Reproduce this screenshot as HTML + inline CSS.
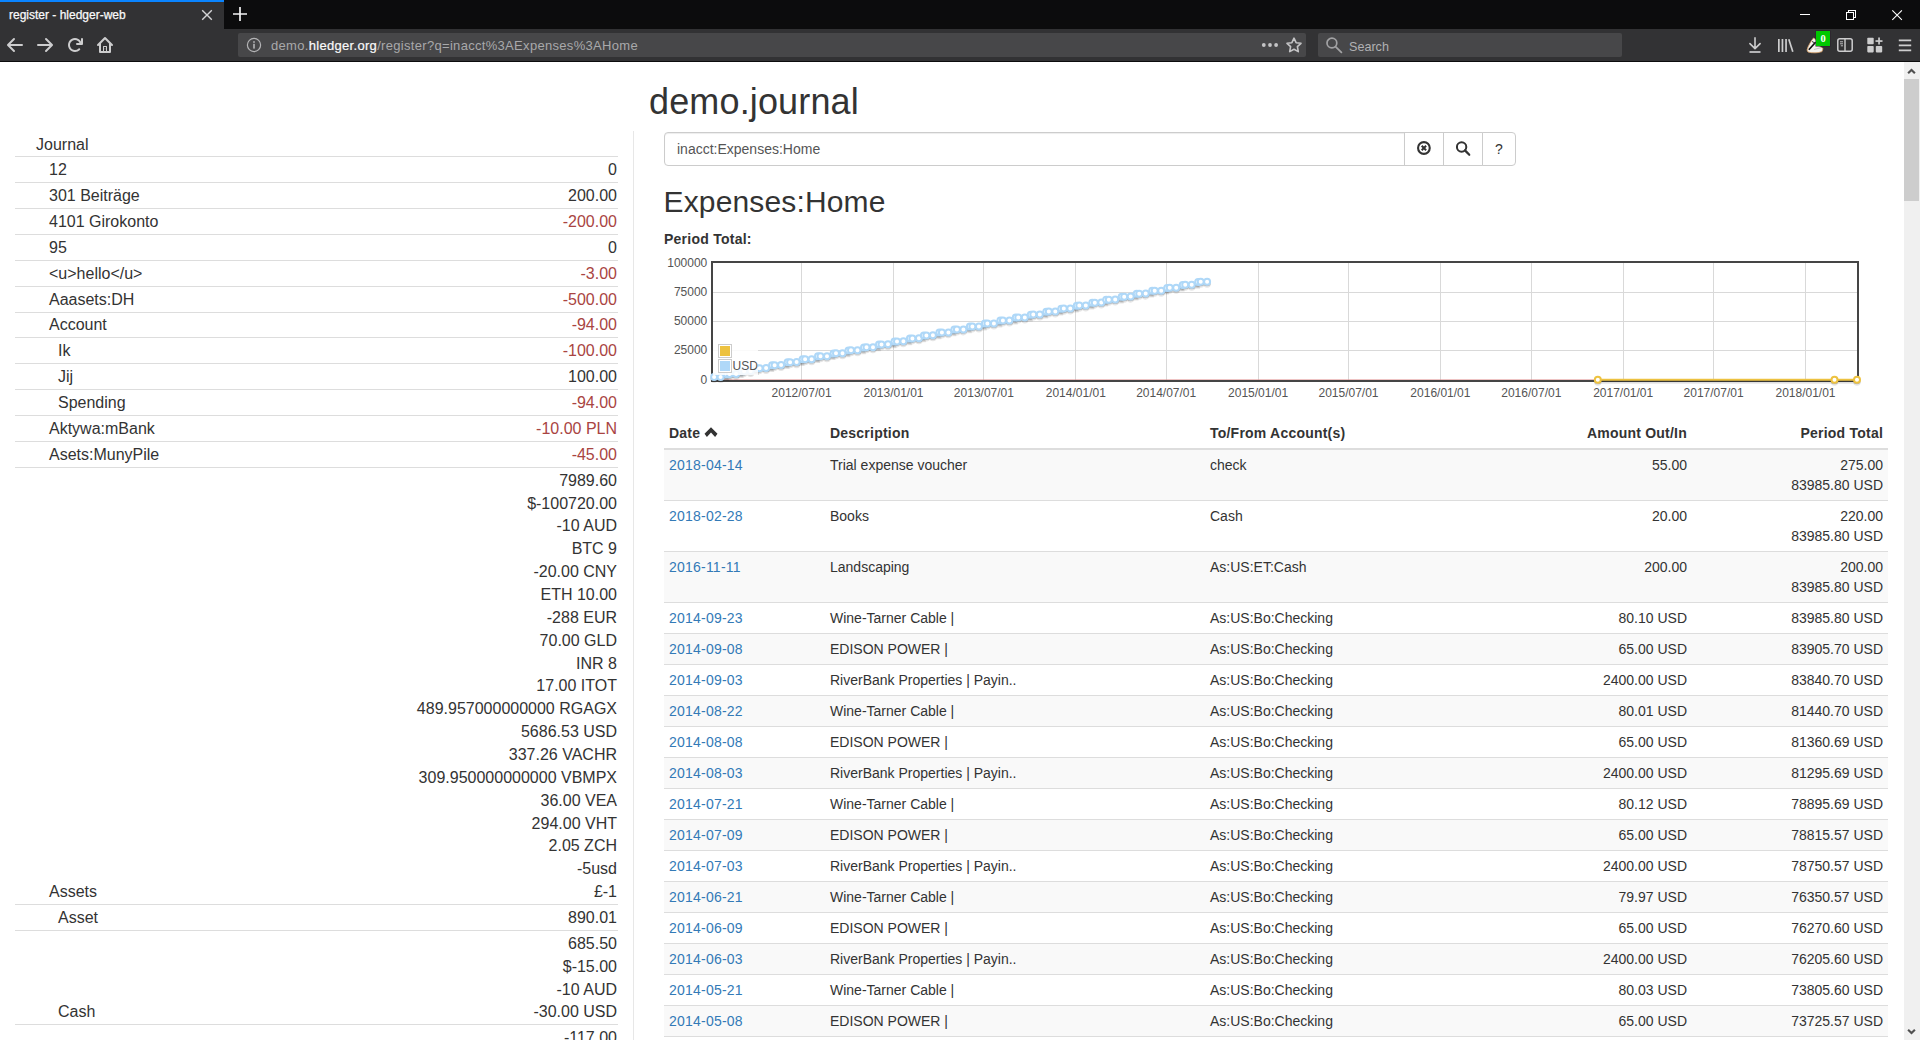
<!DOCTYPE html>
<html lang="en">
<head>
<meta charset="utf-8">
<title>register - hledger-web</title>
<style>
*{box-sizing:border-box}
html,body{margin:0;padding:0}
body{width:1920px;height:1040px;overflow:hidden;position:relative;background:#fff;font-family:"Liberation Sans",Arial,sans-serif;font-size:14px;line-height:20px;color:#333}
a{color:#337ab7;text-decoration:none}
svg{display:block}
/* ---------- browser chrome ---------- */
#chrome{position:absolute;left:0;top:0;width:1920px;height:62px;background:#0c0c0d;font-family:"Liberation Sans",sans-serif}
#tab{position:absolute;left:0;top:0;width:224px;height:29px;background:#323234;border-top:2px solid #0a84ff;color:#f9f9fa;font-size:12px}
#tab .ttl{position:absolute;left:9px;top:3px;line-height:20px;white-space:nowrap;-webkit-text-stroke:.25px #f9f9fa}
#nav{position:absolute;left:0;top:29px;width:1920px;height:32px;background:#323234}
#urlbar{position:absolute;left:238px;top:4px;width:1068px;height:24px;background:#474749;border-radius:2px}
#urlbar .u{position:absolute;left:33px;top:3px;line-height:20px;font-size:13px;letter-spacing:.31px;color:#a9a9ab;white-space:nowrap}
#urlbar .u b{font-weight:normal;color:#f9f9fa;-webkit-text-stroke:.2px #f9f9fa}
#searchbox{position:absolute;left:1318px;top:4px;width:304px;height:24px;background:#474749;border-radius:2px}
#searchbox .s{position:absolute;left:31px;top:4px;line-height:20px;font-size:12.600px;color:#b1b1b3}
.ic{position:absolute;overflow:visible}
/* ---------- page ---------- */
#page{position:absolute;left:0;top:62px;width:1903px;height:978px;overflow:hidden;background:#fff}
#vscroll{position:absolute;left:1904px;top:62px;width:16px;height:978px;background:#f0f0f0}
#vscroll .thumb{position:absolute;left:0;top:17px;width:15px;height:122px;background:#cdcdcd}
h1.title{position:absolute;left:649px;top:20px;margin:0;letter-spacing:.15px;font-size:36px;line-height:40px;font-weight:normal;color:#333;white-space:nowrap}
/* sidebar */
#sidebar{position:absolute;left:15px;top:68.571px;width:603px;font-size:16px;line-height:22.860px}
#sidebar .row{display:flex;justify-content:space-between;align-items:flex-end;border-top:1px solid #ddd;padding:1.910px 1px .1px 34px;white-space:nowrap}
#sidebar .row.first{border-top:0;padding-left:21px;padding-top:2.910px}
#sidebar .row.first span{position:relative;top:1px}
#sidebar .row.i2{padding-left:43px}
#sidebar .amt{text-align:right}
#sidebar .neg{color:#a94442}
/* main */
#main{position:absolute;left:633px;top:69px;width:1270px;height:1200px;border-left:1px solid #e7e7e7}
#sform{position:absolute;left:30px;top:1px;width:852px;height:34px}
#sform .inp{position:absolute;left:0;top:0;width:741px;height:34px;border:1px solid #ccc;border-radius:4px 0 0 4px;padding:6px 12px;font-size:14px;line-height:20px;color:#555;box-shadow:inset 0 1px 1px rgba(0,0,0,.075)}
#sform .btn{position:absolute;top:0;height:34px;border:1px solid #ccc;background:#fff;color:#333;text-align:center;font-size:14px;line-height:20px;padding-top:6px}
h2.acct{position:absolute;left:29.500px;top:54px;margin:0;letter-spacing:.15px;font-size:30px;line-height:33px;font-weight:normal;white-space:nowrap}
.ptlabel{position:absolute;left:30px;top:98px;font-weight:bold;font-size:14px;letter-spacing:.25px;line-height:20px;white-space:nowrap}
#chart{position:absolute;left:30px;top:120px;width:1224px;height:150px}
#chart text{font-family:"Liberation Sans",Arial,sans-serif;font-size:12px;fill:#545454}
#reg{position:absolute;left:30px;top:287px;width:1224px;border-collapse:collapse;table-layout:fixed}
#reg th{padding:5px;text-align:left;font-weight:bold;letter-spacing:.22px;border-bottom:2px solid #ddd;white-space:nowrap}
#reg td{padding:5px;border-top:1px solid #ddd;vertical-align:top;white-space:nowrap;overflow:hidden}
#reg tbody tr:nth-child(odd){background:#f9f9f9}
#reg .r{text-align:right}
#reg td a{letter-spacing:.22px}
</style>
</head>
<body>
<div id="chrome">
  <div id="tab"><span class="ttl">register - hledger-web</span>
    <svg class="ic" style="left:201px;top:7.200px" width="12" height="12" viewBox="0 0 12 12"><path d="M1.2 1.2L10.8 10.8M10.8 1.2L1.2 10.8" stroke="#d4d4d6" stroke-width="1.4" fill="none"/></svg>
  </div>
  <svg class="ic" style="left:232px;top:6.300px" width="16" height="16" viewBox="0 0 16 16"><path d="M8 1v14M1 8h14" stroke="#f4f4f5" stroke-width="1.7" fill="none"/></svg>
  <!-- window controls -->
  <svg class="ic" style="left:1790px;top:0" width="130" height="29" viewBox="0 0 130 29"><g stroke="#fff" stroke-width="1" fill="none" shape-rendering="crispEdges"><path d="M10 14.5h10"/><rect x="56.5" y="12.5" width="7" height="7"/><path d="M58.5 12.5v-2h7v7h-2"/></g><path d="M102.3 10.3l9.6 9.6M111.9 10.3l-9.6 9.6" stroke="#fff" stroke-width="1.1" fill="none"/></svg>
  <div id="nav">
    <!-- back -->
    <svg class="ic" style="left:7px;top:8px" width="16" height="16" viewBox="0 0 16 16"><path fill="#cdcdce" d="M15 7H3.414l4.293-4.293a1 1 0 0 0-1.414-1.414l-6 6a1 1 0 0 0 0 1.414l6 6a1 1 0 0 0 1.414-1.414L3.414 9H15a1 1 0 0 0 0-2z"/></svg>
    <!-- forward -->
    <svg class="ic" style="left:37px;top:8px" width="16" height="16" viewBox="0 0 16 16"><path fill="#cdcdce" transform="translate(16,0) scale(-1,1)" d="M15 7H3.414l4.293-4.293a1 1 0 0 0-1.414-1.414l-6 6a1 1 0 0 0 0 1.414l6 6a1 1 0 0 0 1.414-1.414L3.414 9H15a1 1 0 0 0 0-2z"/></svg>
    <!-- reload -->
    <svg class="ic" style="left:67px;top:8px" width="16" height="16" viewBox="0 0 16 16"><path fill="#cdcdce" d="M15 1a1 1 0 0 0-1 1v2.418A6.995 6.995 0 1 0 8 15a6.954 6.954 0 0 0 4.95-2.05 1 1 0 0 0-1.414-1.414A5.019 5.019 0 1 1 12.549 6H10a1 1 0 0 0 0 2h5a1 1 0 0 0 1-1V2a1 1 0 0 0-1-1z"/></svg>
    <!-- home -->
    <svg class="ic" style="left:97px;top:8px" width="16" height="16" viewBox="0 0 16 16"><path fill="#cdcdce" fill-rule="evenodd" d="M15.707 7.293l-7-7a1 1 0 0 0-1.414 0l-7 7a1 1 0 0 0 1.414 1.414L2 8.414V15a1 1 0 0 0 1 1h10a1 1 0 0 0 1-1V8.414l.293.293a1 1 0 0 0 1.414-1.414zM12 14h-2v-4.5a.5.5 0 0 0-.5-.5h-3a.5.5 0 0 0-.5.5V14H4V6.414l4-4 4 4z M7 10h2v4H7z M7.6 11.4h.8v.9h-.8z"/></svg>
    <div id="urlbar">
      <svg class="ic" style="left:8px;top:4px" width="16" height="16" viewBox="0 0 16 16"><circle cx="8" cy="8" r="6.6" fill="none" stroke="#b4b4b6" stroke-width="1.2"/><rect x="7.2" y="6.8" width="1.6" height="4.8" fill="#b4b4b6"/><rect x="7.2" y="4.2" width="1.6" height="1.6" fill="#b4b4b6"/></svg>
      <span class="u">demo.<b>hledger.org</b>/register?q=inacct%3AExpenses%3AHome</span>
      <svg class="ic" style="left:1022px;top:4px" width="16" height="16" viewBox="0 0 16 16"><circle cx="3.8" cy="8" r="1.900" fill="#c4c4c6"/><circle cx="10" cy="8" r="1.900" fill="#c4c4c6"/><circle cx="16.1" cy="8" r="1.900" fill="#c4c4c6"/></svg>
      <svg class="ic" style="left:1048px;top:4px" width="16" height="16" viewBox="0 0 16 16"><path d="M8 1.2l2.1 4.5 4.9.6-3.6 3.4.9 4.9L8 12.2l-4.3 2.4.9-4.9L1 6.300l4.9-.6z" fill="none" stroke="#c4c4c6" stroke-width="1.600" stroke-linejoin="round"/></svg>
    </div>
    <div id="searchbox">
      <svg class="ic" style="left:6px;top:4px" width="18" height="18" viewBox="0 0 18 18"><circle cx="7.9" cy="6" r="4.9" fill="none" stroke="#a2a2a4" stroke-width="1.700"/><path d="M11.500 9.700L17.400 15.300" stroke="#a2a2a4" stroke-width="1.800" fill="none" stroke-linecap="round"/></svg>
      <span class="s">Search</span>
    </div>
    <!-- downloads -->
    <svg class="ic" style="left:1747px;top:8px" width="16" height="16" viewBox="0 0 16 16"><g stroke="#cdcdce" stroke-width="1.6" fill="none" stroke-linecap="round" stroke-linejoin="round"><path d="M8 .9v10.400M2.900 6.600l5.100 5 5.100-5"/><path d="M2.500 15h11" stroke-linecap="butt" stroke-width="1.700"/></g></svg>
    <!-- library -->
    <svg class="ic" style="left:1777px;top:8px" width="16" height="16" viewBox="0 0 16 16"><g fill="#cdcdce"><rect x="1" y="2" width="1.7" height="13"/><rect x="4.600" y="2" width="1.7" height="13"/><rect x="8.200" y="2" width="1.7" height="13"/><path d="M11 2.600l1.600-.5 4 12.400-1.600.5z"/></g></svg>
    <!-- extension -->
    <svg class="ic" style="left:1806px;top:1px" width="26" height="24" viewBox="0 0 26 24"><path d="M7.500 8C5 11 2 16 1 20l1 2c4 1.200 10 1.200 14-.4l1-3.100c-3-1.500-5.500-4-6.500-8.500z" fill="#f4f2ee" stroke="#d9a066" stroke-width=".8"/><path d="M2.800 19.800L9.600 12.300" stroke="#111" stroke-width="1.700"/><path d="M6 11.500l3 1.500" stroke="#333" stroke-width="1"/><path d="M8 19.500l7-1.800" stroke="#c8c8c8" stroke-width="1.200" fill="none"/><rect x="9.500" y=".5" width="15" height="16" fill="#2a1c2c"/><rect x="10" y="1" width="14" height="15" fill="#00c800"/><text x="17.100" y="11.900" text-anchor="middle" font-family="Liberation Serif,serif" font-weight="bold" font-size="10.500" fill="#fff">0</text></svg>
    <!-- sidebar -->
    <svg class="ic" style="left:1837px;top:8px" width="16" height="16" viewBox="0 0 16 16"><rect x=".8" y="1.800" width="14.400" height="12.400" rx="2" fill="none" stroke="#cdcdce" stroke-width="1.500"/><path d="M8 2v12" stroke="#cdcdce" stroke-width="1.400"/><path d="M3 4.800h3M3 6.800h3M3.800 8.800h2.200" stroke="#cdcdce" stroke-width=".9"/></svg>
    <!-- addons -->
    <svg class="ic" style="left:1867px;top:8px" width="16" height="16" viewBox="0 0 16 16"><g fill="#cdcdce"><rect x=".3" y=".8" width="6.400" height="6.400" rx=".8"/><rect x=".3" y="9" width="6.400" height="6.400" rx=".8"/><rect x="8.800" y="9" width="6.400" height="6.400" rx=".8"/><rect x="11.200" y=".5" width="1.700" height="7"/><rect x="8.500" y="3.200" width="7" height="1.700"/></g></svg>
    <!-- menu -->
    <svg class="ic" style="left:1897px;top:8px" width="16" height="16" viewBox="0 0 16 16"><path d="M1.800 3.400h12.400M1.800 8.300h12.400M1.800 13.300h12.400" stroke="#cdcdce" stroke-width="1.800" fill="none"/></svg>
  </div>
</div>
<div id="page">
<h1 class="title">demo.journal</h1>
<div id="sidebar">
<div class="row first"><span>Journal</span><span class="amt"></span></div>
<div class="row"><span>12</span><span class="amt">0</span></div>
<div class="row"><span>301 Beiträge</span><span class="amt">200.00</span></div>
<div class="row"><span>4101 Girokonto</span><span class="amt neg">-200.00</span></div>
<div class="row"><span>95</span><span class="amt">0</span></div>
<div class="row"><span>&lt;u&gt;hello&lt;/u&gt;</span><span class="amt neg">-3.00</span></div>
<div class="row"><span>Aaasets:DH</span><span class="amt neg">-500.00</span></div>
<div class="row"><span>Account</span><span class="amt neg">-94.00</span></div>
<div class="row i2"><span>Ik</span><span class="amt neg">-100.00</span></div>
<div class="row i2"><span>Jij</span><span class="amt">100.00</span></div>
<div class="row i2"><span>Spending</span><span class="amt neg">-94.00</span></div>
<div class="row"><span>Aktywa:mBank</span><span class="amt neg">-10.00 PLN</span></div>
<div class="row"><span>Asets:MunyPile</span><span class="amt neg">-45.00</span></div>
<div class="row"><span>Assets</span><span class="amt">7989.60<br>$-100720.00<br>-10 AUD<br>BTC 9<br>-20.00 CNY<br>ETH 10.00<br>-288 EUR<br>70.00 GLD<br>INR 8<br>17.00 ITOT<br>489.957000000000 RGAGX<br>5686.53 USD<br>337.26 VACHR<br>309.950000000000 VBMPX<br>36.00 VEA<br>294.00 VHT<br>2.05 ZCH<br>-5usd<br>£-1</span></div>
<div class="row i2"><span>Asset</span><span class="amt">890.01</span></div>
<div class="row i2"><span>Cash</span><span class="amt">685.50<br>$-15.00<br>-10 AUD<br>-30.00 USD</span></div>
<div class="row i2"><span>Checking</span><span class="amt">-117.00<br>$-200.00<br>-40.00 EUR</span></div>
</div>
<div id="main">
<div id="sform"><div class="inp">inacct:Expenses:Home</div>
<div class="btn" style="left:740px;width:40px"><svg style="margin:2px auto 0" width="14" height="14" viewBox="0 0 14 14"><circle cx="6.900" cy="7" r="5.850" fill="none" stroke="#333" stroke-width="2.100"/><path d="M4.700 4.800l4.400 4.400M9.100 4.800l-4.400 4.400" stroke="#333" stroke-width="2" fill="none"/></svg></div>
<div class="btn" style="left:779px;width:40px"><svg style="margin:1.500px auto 0;transform:translateX(-.4px)" width="15" height="15" viewBox="0 0 15 15"><circle cx="6" cy="6" r="4.700" fill="none" stroke="#333" stroke-width="2"/><path d="M9.400 9.400l4.300 4.300" stroke="#333" stroke-width="2.300" fill="none" stroke-linecap="round"/></svg></div>
<div class="btn" style="left:818px;width:34px;border-radius:0 4px 4px 0">?</div>
</div>
<h2 class="acct">Expenses:Home</h2>
<div class="ptlabel">Period Total:</div>
<svg id="chart" width="1224" height="150" viewBox="0 0 1224 150">
<path d="M49 99.5H1193M49 70.5H1193M49 41.5H1193M137.5 12V129M229.5 12V129M319.5 12V129M411.5 12V129M502.5 12V129M594.5 12V129M684.5 12V129M776.5 12V129M867.5 12V129M959.5 12V129M1049.5 12V129M1141.5 12V129" stroke="#d9d9d9" stroke-width="1" fill="none"/>
<path d="M49 128.5H1193" stroke="#dd8888" stroke-opacity="0.5" stroke-width="1"/>
<rect x="48" y="11" width="1146" height="119" fill="none" stroke="#454545" stroke-width="2"/>
<polyline points="934.2,131.2 1171.0,131.2 1171.0,131.2 1193.4,131.2 1193.4,131.1" fill="none" stroke="#000" stroke-opacity="0.1" stroke-width="3"/><polyline points="934.1,130.5 1170.8,130.5 1170.8,130.5 1193.3,130.5 1193.3,130.4" fill="none" stroke="#000" stroke-opacity="0.1" stroke-width="1.5"/><polyline points="933.8,128.8 1170.5,128.8 1170.5,128.7 1193.0,128.7 1193.0,128.7" fill="none" stroke="#edc240" stroke-width="2"/><path d="M930.8 131.02a3 3 0 0 0 6 0M1167.5 130.99a3 3 0 0 0 6 0M1190.0 130.93a3 3 0 0 0 6 0" fill="none" stroke="#000" stroke-opacity="0.1" stroke-width="1.5"/><path d="M930.8 129.52a3 3 0 0 0 6 0M1167.5 129.49a3 3 0 0 0 6 0M1190.0 129.43a3 3 0 0 0 6 0" fill="none" stroke="#000" stroke-opacity="0.2" stroke-width="1.5"/><g fill="#fff" stroke="#edc240" stroke-width="2"><circle cx="933.8" cy="128.8" r="3"/><circle cx="1170.5" cy="128.7" r="3"/><circle cx="1193.0" cy="128.7" r="3"/></g>
<polyline points="50.6,128.6 57.1,128.6 57.1,128.5 63.6,128.5 63.6,125.7 66.1,125.7 66.1,125.6 72.5,125.6 72.5,125.5 78.0,125.5 78.0,122.7 80.5,122.7 80.5,122.6 87.0,122.6 87.0,122.5 93.5,122.5 93.5,119.7 96.0,119.7 96.0,119.6 102.5,119.6 102.5,119.5 108.5,119.5 108.5,116.7 111.0,116.7 111.0,116.7 117.5,116.7 117.5,116.6 124.0,116.6 124.0,113.8 126.5,113.8 126.5,113.7 133.0,113.7 133.0,113.6 139.0,113.6 139.0,110.8 141.5,110.8 141.5,110.7 148.0,110.7 148.0,110.6 154.5,110.6 154.5,107.8 157.0,107.8 157.0,107.7 163.5,107.7 163.5,107.6 169.9,107.6 169.9,104.8 172.4,104.8 172.4,104.8 178.9,104.8 178.9,104.7 184.9,104.7 184.9,101.8 187.4,101.8 187.4,101.8 193.9,101.8 193.9,101.7 200.4,101.7 200.4,98.9 202.9,98.9 202.9,98.8 209.4,98.8 209.4,98.7 215.4,98.7 215.4,95.9 217.9,95.9 217.9,95.8 224.4,95.8 224.4,95.7 230.9,95.7 230.9,92.9 233.4,92.9 233.4,92.8 239.9,92.8 239.9,92.8 246.4,92.8 246.4,89.9 248.9,89.9 248.9,89.9 255.4,89.9 255.4,89.8 260.4,89.8 260.4,87.0 262.9,87.0 262.9,86.9 269.4,86.9 269.4,86.8 275.9,86.8 275.9,84.0 278.4,84.0 278.4,83.9 284.8,83.9 284.8,83.8 290.8,83.8 290.8,81.0 293.3,81.0 293.3,80.9 299.8,80.9 299.8,80.8 306.3,80.8 306.3,78.0 308.8,78.0 308.8,78.0 315.3,78.0 315.3,77.9 321.3,77.9 321.3,75.0 323.8,75.0 323.8,75.0 330.3,75.0 330.3,74.9 336.8,74.9 336.8,72.1 339.3,72.1 339.3,72.0 345.8,72.0 345.8,71.9 352.3,71.9 352.3,69.1 354.8,69.1 354.8,69.0 361.3,69.0 361.3,68.9 367.3,68.9 367.3,66.1 369.8,66.1 369.8,66.0 376.2,66.0 376.2,66.0 382.7,66.0 382.7,63.1 385.2,63.1 385.2,63.1 391.7,63.1 391.7,63.0 397.7,63.0 397.7,60.2 400.2,60.2 400.2,60.1 406.7,60.1 406.7,60.0 413.2,60.0 413.2,57.2 415.7,57.2 415.7,57.1 422.2,57.1 422.2,57.0 428.7,57.0 428.7,54.2 431.2,54.2 431.2,54.1 437.7,54.1 437.7,54.0 442.7,54.0 442.7,51.2 445.2,51.2 445.2,51.2 451.7,51.2 451.7,51.1 458.2,51.1 458.2,48.3 460.7,48.3 460.7,48.2 467.2,48.2 467.2,48.1 473.1,48.1 473.1,45.3 475.6,45.3 475.6,45.2 482.1,45.2 482.1,45.1 488.6,45.1 488.6,42.3 491.1,42.3 491.1,42.2 497.6,42.2 497.6,42.1 503.6,42.1 503.6,39.3 506.1,39.3 506.1,39.2 512.6,39.2 512.6,39.1 519.1,39.1 519.1,36.3 521.6,36.3 521.6,36.3 528.1,36.3 528.1,36.2 534.6,36.2 534.6,33.4 537.1,33.4 537.1,33.3 543.6,33.3 543.6,33.2" fill="none" stroke="#000" stroke-opacity="0.1" stroke-width="3"/><polyline points="50.4,127.8 56.9,127.8 56.9,127.7 63.4,127.7 63.4,124.9 65.9,124.9 65.9,124.9 72.4,124.9 72.4,124.8 77.9,124.8 77.9,122.0 80.4,122.0 80.4,121.9 86.9,121.9 86.9,121.8 93.4,121.8 93.4,119.0 95.9,119.0 95.9,118.9 102.4,118.9 102.4,118.8 108.4,118.8 108.4,116.0 110.9,116.0 110.9,115.9 117.4,115.9 117.4,115.8 123.9,115.8 123.9,113.0 126.4,113.0 126.4,113.0 132.9,113.0 132.9,112.8 138.9,112.8 138.9,110.0 141.3,110.0 141.3,110.0 147.8,110.0 147.8,109.9 154.3,109.9 154.3,107.1 156.8,107.1 156.8,107.0 163.3,107.0 163.3,106.9 169.8,106.9 169.8,104.1 172.3,104.1 172.3,104.0 178.8,104.0 178.8,103.9 184.8,103.9 184.8,101.1 187.3,101.1 187.3,101.0 193.8,101.0 193.8,100.9 200.3,100.9 200.3,98.1 202.8,98.1 202.8,98.1 209.3,98.1 209.3,98.0 215.3,98.0 215.3,95.2 217.8,95.2 217.8,95.1 224.3,95.1 224.3,95.0 230.8,95.0 230.8,92.2 233.3,92.2 233.3,92.1 239.8,92.1 239.8,92.0 246.2,92.0 246.2,89.2 248.8,89.2 248.8,89.1 255.2,89.1 255.2,89.0 260.2,89.0 260.2,86.2 262.7,86.2 262.7,86.2 269.2,86.2 269.2,86.1 275.7,86.1 275.7,83.2 278.2,83.2 278.2,83.2 284.7,83.2 284.7,83.1 290.7,83.1 290.7,80.3 293.2,80.3 293.2,80.2 299.7,80.2 299.7,80.1 306.2,80.1 306.2,77.3 308.7,77.3 308.7,77.2 315.2,77.2 315.2,77.1 321.2,77.1 321.2,74.3 323.7,74.3 323.7,74.2 330.2,74.2 330.2,74.1 336.7,74.1 336.7,71.3 339.1,71.3 339.1,71.3 345.6,71.3 345.6,71.2 352.1,71.2 352.1,68.4 354.6,68.4 354.6,68.3 361.1,68.3 361.1,68.2 367.1,68.2 367.1,65.4 369.6,65.4 369.6,65.3 376.1,65.3 376.1,65.2 382.6,65.2 382.6,62.4 385.1,62.4 385.1,62.3 391.6,62.3 391.6,62.2 397.6,62.2 397.6,59.4 400.1,59.4 400.1,59.4 406.6,59.4 406.6,59.3 413.1,59.3 413.1,56.5 415.6,56.5 415.6,56.4 422.1,56.4 422.1,56.3 428.6,56.3 428.6,53.5 431.1,53.5 431.1,53.4 437.6,53.4 437.6,53.3 442.6,53.3 442.6,50.5 445.1,50.5 445.1,50.4 451.5,50.4 451.5,50.3 458.0,50.3 458.0,47.5 460.5,47.5 460.5,47.4 467.0,47.4 467.0,47.4 473.0,47.4 473.0,44.5 475.5,44.5 475.5,44.5 482.0,44.5 482.0,44.4 488.5,44.4 488.5,41.6 491.0,41.6 491.0,41.5 497.5,41.5 497.5,41.4 503.5,41.4 503.5,38.6 506.0,38.6 506.0,38.5 512.5,38.5 512.5,38.4 519.0,38.4 519.0,35.6 521.5,35.6 521.5,35.5 528.0,35.5 528.0,35.4 534.5,35.4 534.5,32.6 537.0,32.6 537.0,32.5 543.5,32.5 543.5,32.5" fill="none" stroke="#000" stroke-opacity="0.1" stroke-width="1.5"/><polyline points="50.1,126.1 56.6,126.1 56.6,126.0 63.1,126.0 63.1,123.2 65.6,123.2 65.6,123.1 72.1,123.1 72.1,123.0 77.6,123.0 77.6,120.2 80.1,120.2 80.1,120.2 86.6,120.2 86.6,120.1 93.1,120.1 93.1,117.3 95.6,117.3 95.6,117.2 102.1,117.2 102.1,117.1 108.1,117.1 108.1,114.3 110.6,114.3 110.6,114.2 117.1,114.2 117.1,114.1 123.6,114.1 123.6,111.3 126.1,111.3 126.1,111.2 132.6,111.2 132.6,111.1 138.6,111.1 138.6,108.3 141.1,108.3 141.1,108.2 147.6,108.2 147.6,108.2 154.0,108.2 154.0,105.3 156.5,105.3 156.5,105.3 163.0,105.3 163.0,105.2 169.5,105.2 169.5,102.4 172.0,102.4 172.0,102.3 178.5,102.3 178.5,102.2 184.5,102.2 184.5,99.4 187.0,99.4 187.0,99.3 193.5,99.3 193.5,99.2 200.0,99.2 200.0,96.4 202.5,96.4 202.5,96.3 209.0,96.3 209.0,96.2 215.0,96.2 215.0,93.4 217.5,93.4 217.5,93.4 224.0,93.4 224.0,93.3 230.5,93.3 230.5,90.5 233.0,90.5 233.0,90.4 239.4,90.4 239.4,90.3 245.9,90.3 245.9,87.5 248.4,87.5 248.4,87.4 254.9,87.4 254.9,87.3 259.9,87.3 259.9,84.5 262.4,84.5 262.4,84.4 268.9,84.4 268.9,84.3 275.4,84.3 275.4,81.5 277.9,81.5 277.9,81.5 284.4,81.5 284.4,81.4 290.4,81.4 290.4,78.5 292.9,78.5 292.9,78.5 299.4,78.5 299.4,78.4 305.9,78.4 305.9,75.6 308.4,75.6 308.4,75.5 314.9,75.5 314.9,75.4 320.9,75.4 320.9,72.6 323.4,72.6 323.4,72.5 329.9,72.5 329.9,72.4 336.4,72.4 336.4,69.6 338.9,69.6 338.9,69.5 345.4,69.5 345.4,69.5 351.8,69.5 351.8,66.6 354.3,66.6 354.3,66.6 360.8,66.6 360.8,66.5 366.8,66.5 366.8,63.7 369.3,63.7 369.3,63.6 375.8,63.6 375.8,63.5 382.3,63.5 382.3,60.7 384.8,60.7 384.8,60.6 391.3,60.6 391.3,60.5 397.3,60.5 397.3,57.7 399.8,57.7 399.8,57.6 406.3,57.6 406.3,57.5 412.8,57.5 412.8,54.7 415.3,54.7 415.3,54.6 421.8,54.6 421.8,54.6 428.3,54.6 428.3,51.8 430.8,51.8 430.8,51.7 437.3,51.7 437.3,51.6 442.2,51.6 442.2,48.8 444.8,48.8 444.8,48.7 451.2,48.7 451.2,48.6 457.7,48.6 457.7,45.8 460.2,45.8 460.2,45.7 466.7,45.7 466.7,45.6 472.7,45.6 472.7,42.8 475.2,42.8 475.2,42.7 481.7,42.7 481.7,42.6 488.2,42.6 488.2,39.8 490.7,39.8 490.7,39.8 497.2,39.8 497.2,39.7 503.2,39.7 503.2,36.9 505.7,36.9 505.7,36.8 512.2,36.8 512.2,36.7 518.7,36.7 518.7,33.9 521.2,33.9 521.2,33.8 527.7,33.8 527.7,33.7 534.2,33.7 534.2,30.9 536.7,30.9 536.7,30.8 543.1,30.8 543.1,30.7" fill="none" stroke="#afd8f8" stroke-width="2"/><path d="M47.1 128.37a3 3 0 0 0 6 0M53.6 128.27a3 3 0 0 0 6 0M60.1 125.46a3 3 0 0 0 6 0M62.6 125.39a3 3 0 0 0 6 0M69.1 125.29a3 3 0 0 0 6 0M74.6 122.49a3 3 0 0 0 6 0M77.1 122.41a3 3 0 0 0 6 0M83.6 122.32a3 3 0 0 0 6 0M90.1 119.51a3 3 0 0 0 6 0M92.6 119.43a3 3 0 0 0 6 0M99.1 119.34a3 3 0 0 0 6 0M105.1 116.53a3 3 0 0 0 6 0M107.6 116.46a3 3 0 0 0 6 0M114.1 116.36a3 3 0 0 0 6 0M120.6 113.55a3 3 0 0 0 6 0M123.1 113.48a3 3 0 0 0 6 0M129.6 113.38a3 3 0 0 0 6 0M135.6 110.58a3 3 0 0 0 6 0M138.1 110.50a3 3 0 0 0 6 0M144.6 110.41a3 3 0 0 0 6 0M151.0 107.60a3 3 0 0 0 6 0M153.5 107.52a3 3 0 0 0 6 0M160.0 107.43a3 3 0 0 0 6 0M166.5 104.62a3 3 0 0 0 6 0M169.0 104.54a3 3 0 0 0 6 0M175.5 104.45a3 3 0 0 0 6 0M181.5 101.64a3 3 0 0 0 6 0M184.0 101.57a3 3 0 0 0 6 0M190.5 101.47a3 3 0 0 0 6 0M197.0 98.67a3 3 0 0 0 6 0M199.5 98.59a3 3 0 0 0 6 0M206.0 98.50a3 3 0 0 0 6 0M212.0 95.69a3 3 0 0 0 6 0M214.5 95.61a3 3 0 0 0 6 0M221.0 95.52a3 3 0 0 0 6 0M227.5 92.71a3 3 0 0 0 6 0M230.0 92.63a3 3 0 0 0 6 0M236.4 92.54a3 3 0 0 0 6 0M242.9 89.73a3 3 0 0 0 6 0M245.4 89.66a3 3 0 0 0 6 0M251.9 89.56a3 3 0 0 0 6 0M256.9 86.75a3 3 0 0 0 6 0M259.4 86.68a3 3 0 0 0 6 0M265.9 86.59a3 3 0 0 0 6 0M272.4 83.78a3 3 0 0 0 6 0M274.9 83.70a3 3 0 0 0 6 0M281.4 83.61a3 3 0 0 0 6 0M287.4 80.80a3 3 0 0 0 6 0M289.9 80.72a3 3 0 0 0 6 0M296.4 80.63a3 3 0 0 0 6 0M302.9 77.82a3 3 0 0 0 6 0M305.4 77.75a3 3 0 0 0 6 0M311.9 77.65a3 3 0 0 0 6 0M317.9 74.84a3 3 0 0 0 6 0M320.4 74.77a3 3 0 0 0 6 0M326.9 74.67a3 3 0 0 0 6 0M333.4 71.87a3 3 0 0 0 6 0M335.9 71.79a3 3 0 0 0 6 0M342.4 71.70a3 3 0 0 0 6 0M348.8 68.89a3 3 0 0 0 6 0M351.3 68.81a3 3 0 0 0 6 0M357.8 68.72a3 3 0 0 0 6 0M363.8 65.91a3 3 0 0 0 6 0M366.3 65.84a3 3 0 0 0 6 0M372.8 65.74a3 3 0 0 0 6 0M379.3 62.93a3 3 0 0 0 6 0M381.8 62.86a3 3 0 0 0 6 0M388.3 62.76a3 3 0 0 0 6 0M394.3 59.96a3 3 0 0 0 6 0M396.8 59.88a3 3 0 0 0 6 0M403.3 59.79a3 3 0 0 0 6 0M409.8 56.98a3 3 0 0 0 6 0M412.3 56.90a3 3 0 0 0 6 0M418.8 56.81a3 3 0 0 0 6 0M425.3 54.00a3 3 0 0 0 6 0M427.8 53.92a3 3 0 0 0 6 0M434.3 53.83a3 3 0 0 0 6 0M439.2 51.02a3 3 0 0 0 6 0M441.8 50.95a3 3 0 0 0 6 0M448.2 50.85a3 3 0 0 0 6 0M454.7 48.05a3 3 0 0 0 6 0M457.2 47.97a3 3 0 0 0 6 0M463.7 47.88a3 3 0 0 0 6 0M469.7 45.07a3 3 0 0 0 6 0M472.2 44.99a3 3 0 0 0 6 0M478.7 44.90a3 3 0 0 0 6 0M485.2 42.09a3 3 0 0 0 6 0M487.7 42.01a3 3 0 0 0 6 0M494.2 41.92a3 3 0 0 0 6 0M500.2 39.11a3 3 0 0 0 6 0M502.7 39.04a3 3 0 0 0 6 0M509.2 38.94a3 3 0 0 0 6 0M515.7 36.13a3 3 0 0 0 6 0M518.2 36.06a3 3 0 0 0 6 0M524.7 35.97a3 3 0 0 0 6 0M531.2 33.16a3 3 0 0 0 6 0M533.7 33.08a3 3 0 0 0 6 0M540.1 32.99a3 3 0 0 0 6 0" fill="none" stroke="#000" stroke-opacity="0.1" stroke-width="1.5"/><path d="M47.1 126.87a3 3 0 0 0 6 0M53.6 126.77a3 3 0 0 0 6 0M60.1 123.96a3 3 0 0 0 6 0M62.6 123.89a3 3 0 0 0 6 0M69.1 123.79a3 3 0 0 0 6 0M74.6 120.99a3 3 0 0 0 6 0M77.1 120.91a3 3 0 0 0 6 0M83.6 120.82a3 3 0 0 0 6 0M90.1 118.01a3 3 0 0 0 6 0M92.6 117.93a3 3 0 0 0 6 0M99.1 117.84a3 3 0 0 0 6 0M105.1 115.03a3 3 0 0 0 6 0M107.6 114.96a3 3 0 0 0 6 0M114.1 114.86a3 3 0 0 0 6 0M120.6 112.05a3 3 0 0 0 6 0M123.1 111.98a3 3 0 0 0 6 0M129.6 111.88a3 3 0 0 0 6 0M135.6 109.08a3 3 0 0 0 6 0M138.1 109.00a3 3 0 0 0 6 0M144.6 108.91a3 3 0 0 0 6 0M151.0 106.10a3 3 0 0 0 6 0M153.5 106.02a3 3 0 0 0 6 0M160.0 105.93a3 3 0 0 0 6 0M166.5 103.12a3 3 0 0 0 6 0M169.0 103.04a3 3 0 0 0 6 0M175.5 102.95a3 3 0 0 0 6 0M181.5 100.14a3 3 0 0 0 6 0M184.0 100.07a3 3 0 0 0 6 0M190.5 99.97a3 3 0 0 0 6 0M197.0 97.17a3 3 0 0 0 6 0M199.5 97.09a3 3 0 0 0 6 0M206.0 97.00a3 3 0 0 0 6 0M212.0 94.19a3 3 0 0 0 6 0M214.5 94.11a3 3 0 0 0 6 0M221.0 94.02a3 3 0 0 0 6 0M227.5 91.21a3 3 0 0 0 6 0M230.0 91.13a3 3 0 0 0 6 0M236.4 91.04a3 3 0 0 0 6 0M242.9 88.23a3 3 0 0 0 6 0M245.4 88.16a3 3 0 0 0 6 0M251.9 88.06a3 3 0 0 0 6 0M256.9 85.25a3 3 0 0 0 6 0M259.4 85.18a3 3 0 0 0 6 0M265.9 85.09a3 3 0 0 0 6 0M272.4 82.28a3 3 0 0 0 6 0M274.9 82.20a3 3 0 0 0 6 0M281.4 82.11a3 3 0 0 0 6 0M287.4 79.30a3 3 0 0 0 6 0M289.9 79.22a3 3 0 0 0 6 0M296.4 79.13a3 3 0 0 0 6 0M302.9 76.32a3 3 0 0 0 6 0M305.4 76.25a3 3 0 0 0 6 0M311.9 76.15a3 3 0 0 0 6 0M317.9 73.34a3 3 0 0 0 6 0M320.4 73.27a3 3 0 0 0 6 0M326.9 73.17a3 3 0 0 0 6 0M333.4 70.37a3 3 0 0 0 6 0M335.9 70.29a3 3 0 0 0 6 0M342.4 70.20a3 3 0 0 0 6 0M348.8 67.39a3 3 0 0 0 6 0M351.3 67.31a3 3 0 0 0 6 0M357.8 67.22a3 3 0 0 0 6 0M363.8 64.41a3 3 0 0 0 6 0M366.3 64.34a3 3 0 0 0 6 0M372.8 64.24a3 3 0 0 0 6 0M379.3 61.43a3 3 0 0 0 6 0M381.8 61.36a3 3 0 0 0 6 0M388.3 61.26a3 3 0 0 0 6 0M394.3 58.46a3 3 0 0 0 6 0M396.8 58.38a3 3 0 0 0 6 0M403.3 58.29a3 3 0 0 0 6 0M409.8 55.48a3 3 0 0 0 6 0M412.3 55.40a3 3 0 0 0 6 0M418.8 55.31a3 3 0 0 0 6 0M425.3 52.50a3 3 0 0 0 6 0M427.8 52.42a3 3 0 0 0 6 0M434.3 52.33a3 3 0 0 0 6 0M439.2 49.52a3 3 0 0 0 6 0M441.8 49.45a3 3 0 0 0 6 0M448.2 49.35a3 3 0 0 0 6 0M454.7 46.55a3 3 0 0 0 6 0M457.2 46.47a3 3 0 0 0 6 0M463.7 46.38a3 3 0 0 0 6 0M469.7 43.57a3 3 0 0 0 6 0M472.2 43.49a3 3 0 0 0 6 0M478.7 43.40a3 3 0 0 0 6 0M485.2 40.59a3 3 0 0 0 6 0M487.7 40.51a3 3 0 0 0 6 0M494.2 40.42a3 3 0 0 0 6 0M500.2 37.61a3 3 0 0 0 6 0M502.7 37.54a3 3 0 0 0 6 0M509.2 37.44a3 3 0 0 0 6 0M515.7 34.63a3 3 0 0 0 6 0M518.2 34.56a3 3 0 0 0 6 0M524.7 34.47a3 3 0 0 0 6 0M531.2 31.66a3 3 0 0 0 6 0M533.7 31.58a3 3 0 0 0 6 0M540.1 31.49a3 3 0 0 0 6 0" fill="none" stroke="#000" stroke-opacity="0.2" stroke-width="1.5"/><g fill="#fff" stroke="#afd8f8" stroke-width="2"><circle cx="50.1" cy="126.1" r="3"/><circle cx="56.6" cy="126.0" r="3"/><circle cx="63.1" cy="123.2" r="3"/><circle cx="65.6" cy="123.1" r="3"/><circle cx="72.1" cy="123.0" r="3"/><circle cx="77.6" cy="120.2" r="3"/><circle cx="80.1" cy="120.2" r="3"/><circle cx="86.6" cy="120.1" r="3"/><circle cx="93.1" cy="117.3" r="3"/><circle cx="95.6" cy="117.2" r="3"/><circle cx="102.1" cy="117.1" r="3"/><circle cx="108.1" cy="114.3" r="3"/><circle cx="110.6" cy="114.2" r="3"/><circle cx="117.1" cy="114.1" r="3"/><circle cx="123.6" cy="111.3" r="3"/><circle cx="126.1" cy="111.2" r="3"/><circle cx="132.6" cy="111.1" r="3"/><circle cx="138.6" cy="108.3" r="3"/><circle cx="141.1" cy="108.2" r="3"/><circle cx="147.6" cy="108.2" r="3"/><circle cx="154.0" cy="105.3" r="3"/><circle cx="156.5" cy="105.3" r="3"/><circle cx="163.0" cy="105.2" r="3"/><circle cx="169.5" cy="102.4" r="3"/><circle cx="172.0" cy="102.3" r="3"/><circle cx="178.5" cy="102.2" r="3"/><circle cx="184.5" cy="99.4" r="3"/><circle cx="187.0" cy="99.3" r="3"/><circle cx="193.5" cy="99.2" r="3"/><circle cx="200.0" cy="96.4" r="3"/><circle cx="202.5" cy="96.3" r="3"/><circle cx="209.0" cy="96.2" r="3"/><circle cx="215.0" cy="93.4" r="3"/><circle cx="217.5" cy="93.4" r="3"/><circle cx="224.0" cy="93.3" r="3"/><circle cx="230.5" cy="90.5" r="3"/><circle cx="233.0" cy="90.4" r="3"/><circle cx="239.4" cy="90.3" r="3"/><circle cx="245.9" cy="87.5" r="3"/><circle cx="248.4" cy="87.4" r="3"/><circle cx="254.9" cy="87.3" r="3"/><circle cx="259.9" cy="84.5" r="3"/><circle cx="262.4" cy="84.4" r="3"/><circle cx="268.9" cy="84.3" r="3"/><circle cx="275.4" cy="81.5" r="3"/><circle cx="277.9" cy="81.5" r="3"/><circle cx="284.4" cy="81.4" r="3"/><circle cx="290.4" cy="78.5" r="3"/><circle cx="292.9" cy="78.5" r="3"/><circle cx="299.4" cy="78.4" r="3"/><circle cx="305.9" cy="75.6" r="3"/><circle cx="308.4" cy="75.5" r="3"/><circle cx="314.9" cy="75.4" r="3"/><circle cx="320.9" cy="72.6" r="3"/><circle cx="323.4" cy="72.5" r="3"/><circle cx="329.9" cy="72.4" r="3"/><circle cx="336.4" cy="69.6" r="3"/><circle cx="338.9" cy="69.5" r="3"/><circle cx="345.4" cy="69.5" r="3"/><circle cx="351.8" cy="66.6" r="3"/><circle cx="354.3" cy="66.6" r="3"/><circle cx="360.8" cy="66.5" r="3"/><circle cx="366.8" cy="63.7" r="3"/><circle cx="369.3" cy="63.6" r="3"/><circle cx="375.8" cy="63.5" r="3"/><circle cx="382.3" cy="60.7" r="3"/><circle cx="384.8" cy="60.6" r="3"/><circle cx="391.3" cy="60.5" r="3"/><circle cx="397.3" cy="57.7" r="3"/><circle cx="399.8" cy="57.6" r="3"/><circle cx="406.3" cy="57.5" r="3"/><circle cx="412.8" cy="54.7" r="3"/><circle cx="415.3" cy="54.6" r="3"/><circle cx="421.8" cy="54.6" r="3"/><circle cx="428.3" cy="51.8" r="3"/><circle cx="430.8" cy="51.7" r="3"/><circle cx="437.3" cy="51.6" r="3"/><circle cx="442.2" cy="48.8" r="3"/><circle cx="444.8" cy="48.7" r="3"/><circle cx="451.2" cy="48.6" r="3"/><circle cx="457.7" cy="45.8" r="3"/><circle cx="460.2" cy="45.7" r="3"/><circle cx="466.7" cy="45.6" r="3"/><circle cx="472.7" cy="42.8" r="3"/><circle cx="475.2" cy="42.7" r="3"/><circle cx="481.7" cy="42.6" r="3"/><circle cx="488.2" cy="39.8" r="3"/><circle cx="490.7" cy="39.8" r="3"/><circle cx="497.2" cy="39.7" r="3"/><circle cx="503.2" cy="36.9" r="3"/><circle cx="505.7" cy="36.8" r="3"/><circle cx="512.2" cy="36.7" r="3"/><circle cx="518.7" cy="33.9" r="3"/><circle cx="521.2" cy="33.8" r="3"/><circle cx="527.7" cy="33.7" r="3"/><circle cx="534.2" cy="30.9" r="3"/><circle cx="536.7" cy="30.8" r="3"/><circle cx="543.1" cy="30.7" r="3"/></g>
<rect x="49" y="92" width="45" height="32" fill="#fff" fill-opacity="0.85"/>
<rect x="54.5" y="93.5" width="13" height="13" fill="#fff" stroke="#ccc"/><rect x="56" y="95" width="10" height="10" fill="#edc240"/>
<rect x="54.5" y="108.5" width="13" height="13" fill="#fff" stroke="#ccc"/><rect x="56" y="110" width="10" height="10" fill="#afd8f8"/>
<text x="68.5" y="119.3">USD</text>
<text x="43.3" y="133.3" text-anchor="end">0</text>
<text x="43.3" y="103.3" text-anchor="end">25000</text>
<text x="43.3" y="74.3" text-anchor="end">50000</text>
<text x="43.3" y="45.3" text-anchor="end">75000</text>
<text x="43.3" y="16.3" text-anchor="end">100000</text>
<text x="137.6" y="145.6" text-anchor="middle">2012/07/01</text>
<text x="229.5" y="145.6" text-anchor="middle">2013/01/01</text>
<text x="319.9" y="145.6" text-anchor="middle">2013/07/01</text>
<text x="411.8" y="145.6" text-anchor="middle">2014/01/01</text>
<text x="502.2" y="145.6" text-anchor="middle">2014/07/01</text>
<text x="594.1" y="145.6" text-anchor="middle">2015/01/01</text>
<text x="684.5" y="145.6" text-anchor="middle">2015/07/01</text>
<text x="776.4" y="145.6" text-anchor="middle">2016/01/01</text>
<text x="867.3" y="145.6" text-anchor="middle">2016/07/01</text>
<text x="959.2" y="145.6" text-anchor="middle">2017/01/01</text>
<text x="1049.6" y="145.6" text-anchor="middle">2017/07/01</text>
<text x="1141.5" y="145.6" text-anchor="middle">2018/01/01</text>
</svg>
<table id="reg"><colgroup><col style="width:161px"><col style="width:380px"><col style="width:290px"><col style="width:197px"><col style="width:196px"></colgroup>
<thead><tr><th>Date<svg style="display:inline-block;vertical-align:0;margin-left:4px" width="14" height="11" viewBox="0 0 14 11"><path d="M7 0.300L13.500 6.800 11.100 9.900 7 5.600 2.900 9.900 0.500 6.800z" fill="#333"/></svg></th><th>Description</th><th>To/From Account(s)</th><th class="r">Amount Out/In</th><th class="r">Period Total</th></tr></thead><tbody>
<tr><td><a>2018-04-14</a></td><td>Trial expense voucher</td><td>check</td><td class="r">55.00</td><td class="r">275.00<br>83985.80 USD</td></tr>
<tr><td><a>2018-02-28</a></td><td>Books</td><td>Cash</td><td class="r">20.00</td><td class="r">220.00<br>83985.80 USD</td></tr>
<tr><td><a>2016-11-11</a></td><td>Landscaping</td><td>As:US:ET:Cash</td><td class="r">200.00</td><td class="r">200.00<br>83985.80 USD</td></tr>
<tr><td><a>2014-09-23</a></td><td>Wine-Tarner Cable |</td><td>As:US:Bo:Checking</td><td class="r">80.10 USD</td><td class="r">83985.80 USD</td></tr>
<tr><td><a>2014-09-08</a></td><td>EDISON POWER |</td><td>As:US:Bo:Checking</td><td class="r">65.00 USD</td><td class="r">83905.70 USD</td></tr>
<tr><td><a>2014-09-03</a></td><td>RiverBank Properties | Payin..</td><td>As:US:Bo:Checking</td><td class="r">2400.00 USD</td><td class="r">83840.70 USD</td></tr>
<tr><td><a>2014-08-22</a></td><td>Wine-Tarner Cable |</td><td>As:US:Bo:Checking</td><td class="r">80.01 USD</td><td class="r">81440.70 USD</td></tr>
<tr><td><a>2014-08-08</a></td><td>EDISON POWER |</td><td>As:US:Bo:Checking</td><td class="r">65.00 USD</td><td class="r">81360.69 USD</td></tr>
<tr><td><a>2014-08-03</a></td><td>RiverBank Properties | Payin..</td><td>As:US:Bo:Checking</td><td class="r">2400.00 USD</td><td class="r">81295.69 USD</td></tr>
<tr><td><a>2014-07-21</a></td><td>Wine-Tarner Cable |</td><td>As:US:Bo:Checking</td><td class="r">80.12 USD</td><td class="r">78895.69 USD</td></tr>
<tr><td><a>2014-07-09</a></td><td>EDISON POWER |</td><td>As:US:Bo:Checking</td><td class="r">65.00 USD</td><td class="r">78815.57 USD</td></tr>
<tr><td><a>2014-07-03</a></td><td>RiverBank Properties | Payin..</td><td>As:US:Bo:Checking</td><td class="r">2400.00 USD</td><td class="r">78750.57 USD</td></tr>
<tr><td><a>2014-06-21</a></td><td>Wine-Tarner Cable |</td><td>As:US:Bo:Checking</td><td class="r">79.97 USD</td><td class="r">76350.57 USD</td></tr>
<tr><td><a>2014-06-09</a></td><td>EDISON POWER |</td><td>As:US:Bo:Checking</td><td class="r">65.00 USD</td><td class="r">76270.60 USD</td></tr>
<tr><td><a>2014-06-03</a></td><td>RiverBank Properties | Payin..</td><td>As:US:Bo:Checking</td><td class="r">2400.00 USD</td><td class="r">76205.60 USD</td></tr>
<tr><td><a>2014-05-21</a></td><td>Wine-Tarner Cable |</td><td>As:US:Bo:Checking</td><td class="r">80.03 USD</td><td class="r">73805.60 USD</td></tr>
<tr><td><a>2014-05-08</a></td><td>EDISON POWER |</td><td>As:US:Bo:Checking</td><td class="r">65.00 USD</td><td class="r">73725.57 USD</td></tr>
<tr><td><a>2014-05-03</a></td><td>RiverBank Properties | Payin..</td><td>As:US:Bo:Checking</td><td class="r">2400.00 USD</td><td class="r">73660.57 USD</td></tr>
</tbody></table>
</div>
</div>
<div id="vscroll"><div class="thumb"></div>
<svg class="ic" style="left:-1px;top:.7px" width="17" height="17" viewBox="0 0 17 17"><path d="M5.100 10.300L8.500 6.900l3.400 3.400" stroke="#505050" stroke-width="2.100" fill="none"/></svg>
<svg class="ic" style="left:-1px;top:961.200px" width="17" height="17" viewBox="0 0 17 17"><path d="M5.100 6.700L8.500 10.100l3.400-3.400" stroke="#505050" stroke-width="2.100" fill="none"/></svg>
</div>
</body>
</html>
